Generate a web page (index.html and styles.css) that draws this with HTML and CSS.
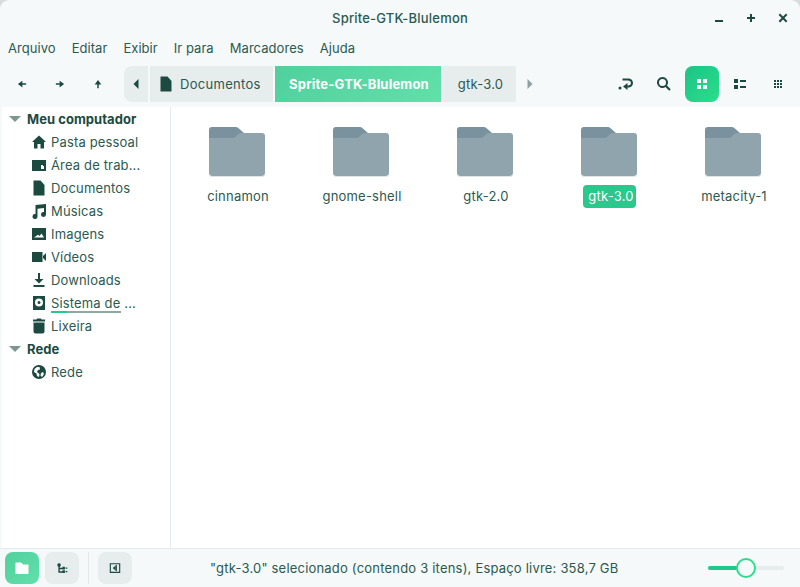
FILE: index.html
```html
<!DOCTYPE html>
<html lang="pt-BR">
<head>
<meta charset="utf-8">
<title>Sprite-GTK-Blulemon</title>
<link rel="stylesheet" href="styles.css">
</head>
<body>
<div class="window">
  <header class="titlebar">
    <div class="title">Sprite-GTK-Blulemon</div>
    <div class="wm">
      <svg class="wm-icon" viewBox="0 0 16 16"><rect x="4" y="10" width="8" height="2"/></svg>
      <svg class="wm-icon" viewBox="0 0 16 16"><path d="M7 4h2v3h3v2H9v3H7V9H4V7h3z"/></svg>
      <svg class="wm-icon" viewBox="0 0 16 16"><path d="M5 3.600 8 6.600l3-3L12.400 5l-3 3 3 3-1.400 1.400-3-3-3 3L3.600 11l3-3-3-3z"/></svg>
    </div>
  </header>
  <nav class="menubar">
    <span>Arquivo</span><span>Editar</span><span>Exibir</span><span>Ir para</span><span>Marcadores</span><span>Ajuda</span>
  </nav>
  <div class="toolbar">
    <div class="navs">
      <button class="tb"><svg viewBox="0 0 16 16"><path d="M8.500 3.500v3.500h5v2h-5v3.500L2.500 8z"/></svg></button>
      <button class="tb"><svg viewBox="0 0 16 16"><path d="M7.500 3.500v3.500h-5v2h5v3.500L13.500 8z"/></svg></button>
      <button class="tb"><svg viewBox="0 0 16 16"><path d="M8 2.500 12.500 8.500H9v5H7v-5H3.500z"/></svg></button>
    </div>
    <div class="path">
      <div class="crumb back"><svg viewBox="0 0 16 16"><path d="M10.500 3v10L5.500 8z"/></svg></div>
      <div class="crumb docs">
        <svg viewBox="0 0 16 16"><path d="M2.500 .5h7l4 4.500v10.500h-11z"/></svg>
        <span>Documentos</span>
      </div>
      <div class="crumb active">Sprite-GTK-Blulemon</div>
      <div class="crumb tail">gtk-3.0</div>
      <div class="crumb fwd"><svg viewBox="0 0 16 16"><path d="M5.500 3v10l5-5z"/></svg></div>
    </div>
    <div class="actions">
      <button class="tb"><svg viewBox="0 0 16 16"><circle cx="2" cy="12" r="1.500"/><path d="M4.500 2.500h6a4.500 4.500 0 0 1 0 9H9.500V14L5 10.500 9.500 7v2.500h1a2.500 2.500 0 0 0 0-5h-6z"/></svg></button>
      <button class="tb"><svg viewBox="0 0 16 16"><path fill-rule="evenodd" d="M6.500 1a5.500 5.500 0 0 1 4.500 8.600l3.700 3.700-1.500 1.500-3.700-3.700A5.500 5.500 0 1 1 6.500 1zm0 2a3.500 3.500 0 1 0 0 7 3.500 3.500 0 0 0 0-7z"/></svg></button>
      <button class="tb view-on"><svg viewBox="0 0 16 16"><path d="M3 3h4v4H3zM9 3h4v4H9zM3 9h4v4H3zM9 9h4v4H9z"/></svg></button>
      <button class="tb"><svg viewBox="0 0 16 16"><path d="M2 3h4v4H2zM8 4h6v2H8zM2 9h4v4H2zM8 10h6v2H8z"/></svg></button>
      <button class="tb"><svg viewBox="0 0 16 16"><path d="M4 4h2v2H4zM7 4h2v2H7zM10 4h2v2h-2zM4 7h2v2H4zM7 7h2v2H7zM10 7h2v2h-2zM4 10h2v2H4zM7 10h2v2H7zM10 10h2v2h-2z"/></svg></button>
    </div>
  </div>
  <main class="panes">
    <aside class="sidebar">
      <div class="head"><svg class="arrow" viewBox="0 0 12 8"><path d="M0 1h12L6 7z"/></svg>Meu computador</div>
      <div class="place"><svg viewBox="0 0 16 16"><path d="M8 1.500 15 8h-2v6.500H9.500V10h-3v4.500H3V8H1z"/></svg>Pasta pessoal</div>
      <div class="place"><svg viewBox="0 0 16 16"><path fill-rule="evenodd" d="M1 3h14v11H1zm9 5v4h3V9h-1V8z"/></svg>Área de trab...</div>
      <div class="place"><svg viewBox="0 0 16 16"><path d="M2.500 .5h7l4 4.500v10.500h-11z"/></svg>Documentos</div>
      <div class="place"><svg viewBox="0 0 16 16"><path d="M4.500 2 15 1v10.500a2.500 2.500 0 1 1-2-2.400V5L6.500 5.700v7.800a2.500 2.500 0 1 1-2-2.400z"/></svg>Músicas</div>
      <div class="place"><svg viewBox="0 0 16 16"><path fill-rule="evenodd" d="M1 2h14v12H1zm2 9.500h10L10.500 7.500 8.500 10l-1.500-1.200z"/></svg>Imagens</div>
      <div class="place"><svg viewBox="0 0 16 16"><path d="M1 3h10.500v10H1zM12 7l3-3v8l-3-3z"/></svg>Vídeos</div>
      <div class="place"><svg viewBox="0 0 16 16"><path d="M7 1h2v6h3.500L8 11.500 3.500 7H7zM2.500 13h11v2h-11z"/></svg>Downloads</div>
      <div class="place disk"><svg viewBox="0 0 16 16"><path fill-rule="evenodd" d="M2 1h12v14H2zm6 2.500a4 4 0 1 0 0 8 4 4 0 0 0 0-8zm0 2.500a1.500 1.500 0 1 1 0 3 1.500 1.500 0 0 1 0-3z"/></svg>
        <span class="disk-label">Sistema de ...<span class="usage"><span class="used"></span></span></span>
      </div>
      <div class="place"><svg viewBox="0 0 16 16"><path d="M6 .5h4l.5 1H14v2H2v-2h3.500zM2.500 4.500h11v9a2 2 0 0 1-2 2h-7a2 2 0 0 1-2-2z"/></svg>Lixeira</div>
      <div class="head"><svg class="arrow" viewBox="0 0 12 8"><path d="M0 1h12L6 7z"/></svg>Rede</div>
      <div class="place"><svg viewBox="0 0 16 16"><path fill-rule="evenodd" d="M8 1a7 7 0 1 1 0 14A7 7 0 0 1 8 1zM3.500 5 3 8l2.500 1.500L6 12l2 1 .5-3L6 8l1-2 2-.5L8.500 3 6 3zM10 9l-.5 2.500L11 13l2-3-1-2z"/></svg>Rede</div>
    </aside>
    <section class="grid">
      <div class="item"><svg class="folder" viewBox="0 0 56 52"><use href="#folder"/></svg><span class="name">cinnamon</span></div>
      <div class="item"><svg class="folder" viewBox="0 0 56 52"><use href="#folder"/></svg><span class="name">gnome-shell</span></div>
      <div class="item"><svg class="folder" viewBox="0 0 56 52"><use href="#folder"/></svg><span class="name">gtk-2.0</span></div>
      <div class="item"><svg class="folder" viewBox="0 0 56 52"><use href="#folder"/></svg><span class="name selected">gtk-3.0</span></div>
      <div class="item"><svg class="folder" viewBox="0 0 56 52"><use href="#folder"/></svg><span class="name">metacity-1</span></div>
    </section>
  </main>
  <footer class="statusbar">
    <button class="sb sb-on"><svg viewBox="0 0 16 16"><path d="M1.500 2.500h5.500l2 2h5.500v9.500h-13z"/></svg></button>
    <button class="sb"><svg class="tree" viewBox="0 0 16 16"><path d="M3 .5a2.500 2.500 0 0 1 1 4.800V7h4V5.500h3.500v4H8V9H4v3h4v-1.500h3.500v4H8V14H2V5.300A2.500 2.500 0 0 1 3 .5zM12.500 6.500H15V8.500h-2.500zM12.500 11.500H15v2h-2.500z"/></svg></button>
    <span class="sep"></span>
    <button class="sb"><svg class="toggle" viewBox="0 0 16 16"><path fill-rule="evenodd" d="M1 1.500h14v13H1zm1.500 1.500v10h11V3z"/><path d="M9 4.500v7L5 8z"/><path d="M9 4h1.500v8H9z"/></svg></button>
    <div class="status">"gtk-3.0" selecionado (contendo 3 itens), Espaço livre: 358,7 GB</div>
    <div class="slider"><span class="fill"></span><span class="knob"></span></div>
  </footer>
</div>
<svg class="defs" aria-hidden="true">
  <symbol id="folder" viewBox="0 0 56 52">
    <path d="M3 2h24a3 3 0 0 1 2 .8L35 8 30 13H0V5a3 3 0 0 1 3-3z" fill="#7a929e"/>
    <path d="M0 14V13h24a3 3 0 0 0 2-1l3.500-3a3 3 0 0 1 2-1H53a3 3 0 0 1 3 3v37a3 3 0 0 1-3 3H3a3 3 0 0 1-3-3z" fill="#90a4ae"/>
    <path d="M0 48a3 3 0 0 0 3 3h50a3 3 0 0 0 3-3v1a3 3 0 0 1-3 3H3a3 3 0 0 1-3-3z" fill="#dfe4e6"/>
  </symbol>
</svg>
</body>
</html>
```

FILE: styles.css
```css
* { box-sizing: border-box; }
html, body { margin: 0; height: 100%; background: #d8dcdc; }
body { font: 13px "Inter", "Liberation Sans", sans-serif; letter-spacing: .2px; color: #2b5a50; overflow: hidden; }
.defs { display: none; }
.window {
  width: 800px; height: 587px; display: flex; flex-direction: column;
  background: #f5f9fa; border-radius: 9px 9px 0 0; overflow: hidden;
}
.titlebar { height: 35px; flex: none; display: flex; align-items: center; justify-content: center; position: relative; }
.title { font-weight: 500; color: #2b5a50; }
.wm { position: absolute; right: 0; top: 10px; display: flex; gap: 16px; padding-right: 9px; }
.wm-icon { width: 16px; height: 16px; fill: #1c4a40; }
.menubar { height: 25px; flex: none; display: flex; align-items: center; gap: 16px; padding-left: 8px; letter-spacing: .05px; }
.toolbar { height: 36px; margin-top: 6px; flex: none; display: flex; align-items: center; padding-left: 5px; }
button { border: 0; background: none; padding: 0; display: flex; align-items: center; justify-content: center; }
.tb { width: 34px; height: 36px; border-radius: 8px; }
.tb svg { width: 16px; height: 16px; fill: #1c4a40; }
.navs { display: flex; gap: 4px; }
.navs svg { width: 12px; height: 12px; }
.path { display: flex; height: 36px; gap: 2px; margin-left: 9px; }
.crumb { display: flex; align-items: center; padding: 0 15px; background: #e7ecec; }
.crumb svg { width: 16px; height: 16px; fill: #1c4a40; }
.back { width: 24px; padding: 0; justify-content: center; border-radius: 8px 0 0 8px; }
.docs { gap: 6px; padding: 0 0 0 8px; width: 123px; letter-spacing: .3px; }
.active { background: linear-gradient(135deg, #50d09e, #62e0aa); color: #fff; font-weight: 700; width: 166px; padding: 0 0 0 2px; justify-content: center; }
.tail { width: 73px; padding: 0 0 0 2px; justify-content: center; }
.fwd { background: none; padding: 0 0 0 4px; }
.fwd svg { fill: #8aa3a0; }
.actions { margin-left: auto; display: flex; gap: 4px; padding-right: 5px; }
.view-on { background: linear-gradient(135deg, #1cc385, #2ade8c); }
.view-on svg { fill: #fff; }
.panes { flex: 1; min-height: 0; display: flex; margin-top: 5px; }
.sidebar { width: 169px; flex: none; background: #fff; border-right: 1px solid #e6eaea; margin-left: 2px; }
.head, .place { height: 23px; display: flex; align-items: center; white-space: nowrap; }
.head { font-weight: 700; color: #1c4a40; padding-left: 7px; letter-spacing: .05px; }
.arrow { width: 12px; height: 8px; fill: #7c9690; margin-right: 6px; }
.place { padding-left: 29px; gap: 4px; letter-spacing: .15px; }
.place svg { width: 16px; height: 16px; fill: #1c4a40; flex: none; }
.disk-label { position: relative; }
.usage { position: absolute; left: 0; width: 70px; top: 16px; height: 2px; background: #90a8a4; }
.used { display: block; width: 16px; height: 100%; background: #28c88c; }
.grid { flex: 1; background: #fff; display: flex; align-items: flex-start; padding: 18px 0 0 4px; }
.item { width: 124px; display: flex; flex-direction: column; align-items: center; }
.folder { width: 56px; height: 52px; }
.name { margin: 8px 0 0 2px; padding: 3px 5px; line-height: 17px; border-radius: 4px; }
.selected { background: #2cc78d; color: #fff; padding: 3px 2px 3px 5px; margin-left: 1px; }
.statusbar { height: 39px; flex: none; display: flex; align-items: center; padding-left: 5px; border-top: 1px solid #e6eaea; background: #f5f9fa; }
.sb { width: 34px; height: 32px; border-radius: 8px; background: #e7ecec; margin-right: 6px; }
.sb svg { width: 16px; height: 16px; fill: #1c4a40; }
.sb .tree { width: 11px; height: 11px; }
.sb .toggle { width: 12px; height: 12px; }
.sb-on { background: linear-gradient(135deg, #50d09e, #62e0aa); }
.sb-on svg { fill: #fff; }
.sep { width: 1px; height: 32px; background: #e3e8e8; margin: 0 9px 0 3px; }
.status { position: absolute; left: 210px; color: #2b5a50; }
.slider { margin-left: auto; margin-right: 16px; width: 76px; height: 4px; background: #e7ecec; border-radius: 2px; position: relative; }
.fill { position: absolute; left: 0; top: 0; bottom: 0; width: 30px; background: #1fc98a; border-radius: 2px; }
.knob { position: absolute; left: 28px; top: -8px; width: 20px; height: 20px; border-radius: 50%; background: #f5f9fa; border: 2px solid #2ade8c; }
```
